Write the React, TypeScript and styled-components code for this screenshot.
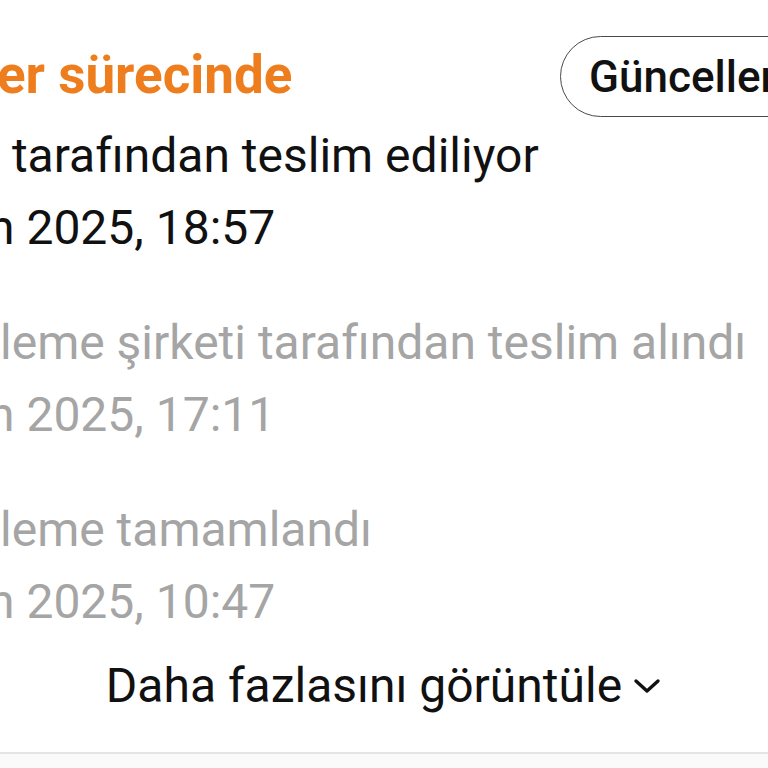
import styled, { createGlobalStyle } from "styled-components";

const GlobalStyle = createGlobalStyle`
  html, body {
    margin: 0;
    padding: 0;
    background: #fafafa;
    overflow: hidden;
  }
  body {
    font-family: Roboto, "Noto Sans", "Liberation Sans", sans-serif;
  }
`;

const App = () => {
  return (
    <>
      <GlobalStyle />
      <Card>
        <Header>
          <Title cut={3}>er sürecinde</Title>
          <UpdateButton>Güncellemeler</UpdateButton>
        </Header>

        <Step>
          <StepText cut={0}> tarafından teslim ediliyor</StepText>
          <StepText cut={12}>n 2025, 18:57</StepText>
        </Step>

        <Step muted>
          <StepText cut={0}>leme şirketi tarafından teslim alındı</StepText>
          <StepText cut={12}>n 2025, 17:11</StepText>
        </Step>

        <Step muted>
          <StepText cut={0}>leme tamamlandı</StepText>
          <StepText cut={12}>n 2025, 10:47</StepText>
        </Step>

        <MoreLink>
          Daha fazlasını görüntüle
          <svg width="30" height="20" viewBox="0 0 30 20" fill="none">
            <path d="M4 5 L15 15 L26 5" stroke="#111" strokeWidth="3.4" strokeLinecap="round" strokeLinejoin="round" />
          </svg>
        </MoreLink>
      </Card>
    </>
  );
};

const Card = styled.div`
  width: 768px;
  height: 752px;
  background: #fff;
  border-bottom: 2px solid #e4e4e4;
  box-shadow: 0 2px 4px rgba(0, 0, 0, 0.04);
  display: flex;
  flex-direction: column;
  overflow: hidden;
`;

const Header = styled.div`
  display: flex;
  justify-content: space-between;
  align-items: center;
  padding-top: 36px;
  height: 81px;
  white-space: nowrap;
`;

const Title = styled.h1<{ cut: number }>`
  margin: -3px 0 0 ${(p) => -p.cut}px;
  font-size: 53px;
  font-weight: 700;
  color: #ee7e1d;
`;

const UpdateButton = styled.button`
  flex-shrink: 0;
  width: 260px;
  height: 81px;
  margin-right: -52px;
  padding: 0 0 0 28px;
  border: 1.5px solid #4a4a4a;
  border-radius: 41px;
  background: #fff;
  font-family: Roboto, "Liberation Sans", sans-serif;
  font-size: 44px;
  font-weight: 500;
  color: #111;
  text-align: left;
  white-space: nowrap;
  overflow: hidden;
`;

const Step = styled.div<{ muted?: boolean }>`
  display: flex;
  flex-direction: column;
  margin-top: ${(p) => (p.muted ? "43px" : "3px")};
  color: ${(p) => (p.muted ? "#a5a5a5" : "#111")};
  white-space: pre;
`;

const StepText = styled.div<{ cut: number }>`
  margin-left: ${(p) => -p.cut}px;
  font-size: 48px;
  line-height: 72px;
`;

const MoreLink = styled.button`
  align-self: center;
  display: flex;
  align-items: center;
  gap: 10px;
  margin-top: 19px;
  border: none;
  background: none;
  padding: 0;
  font-family: Roboto, "Liberation Sans", sans-serif;
  font-size: 48px;
  color: #111;
`;

export default App;
